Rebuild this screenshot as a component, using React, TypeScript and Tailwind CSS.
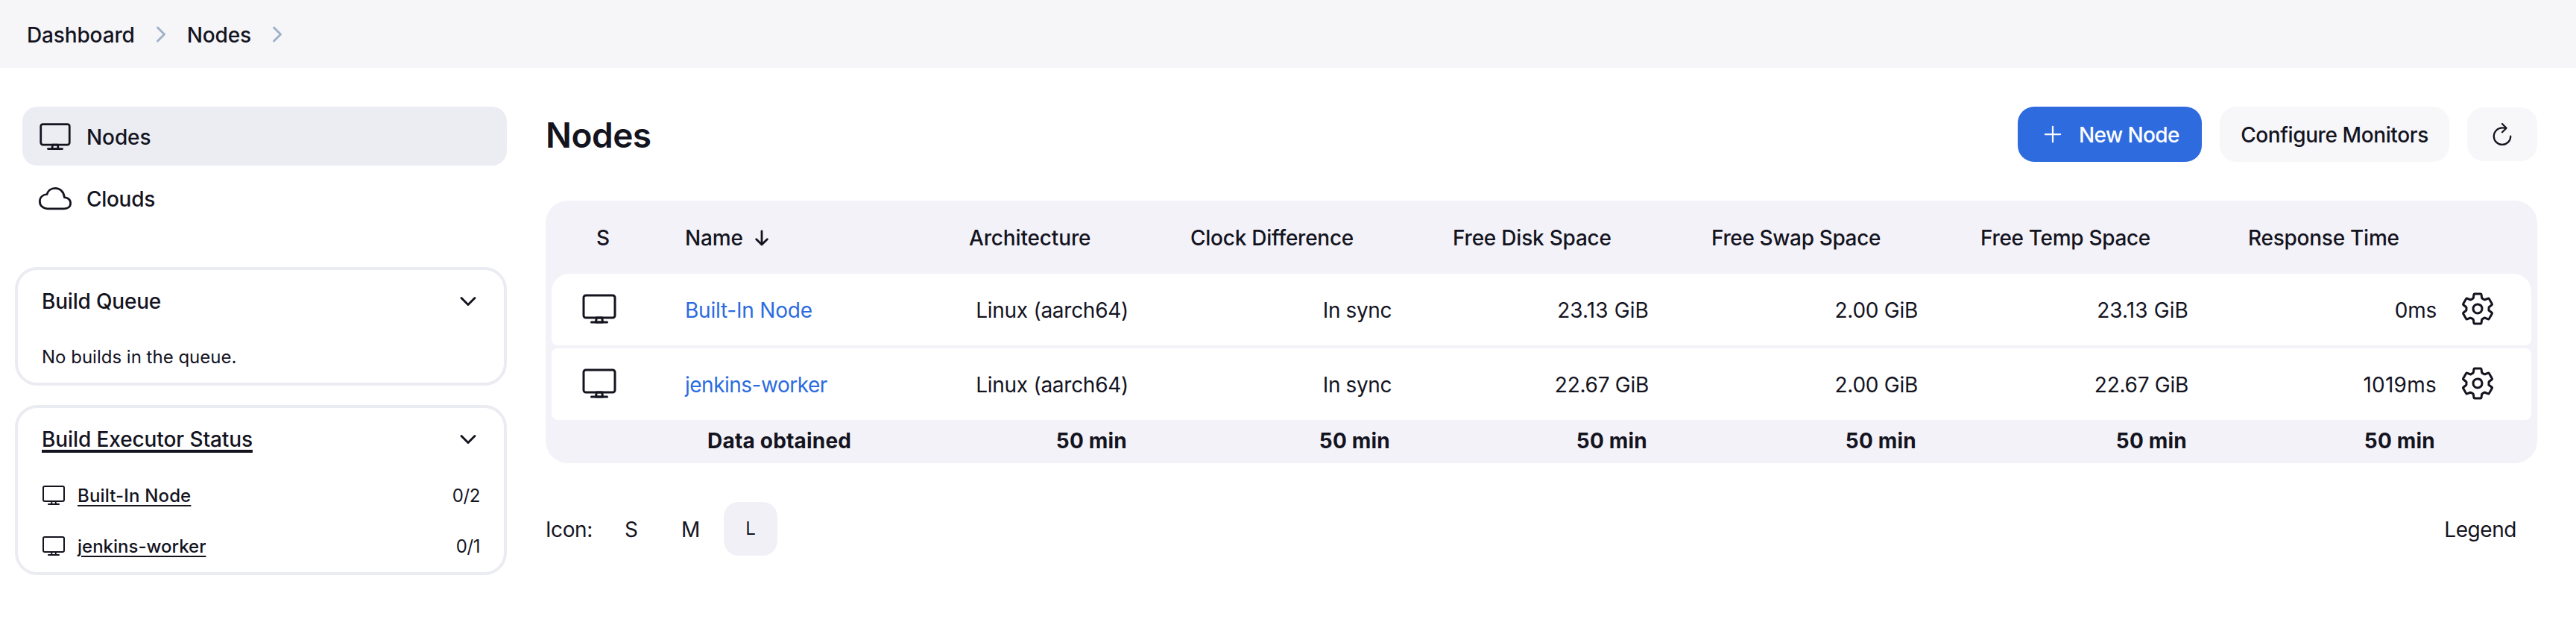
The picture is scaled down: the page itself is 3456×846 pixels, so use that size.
import type { ReactNode } from "react";
import {
  IoAddOutline,
  IoChevronDownOutline,
  IoChevronForwardOutline,
  IoCloudOutline,
  IoRefreshOutline,
  IoSettingsOutline,
} from "react-icons/io5";

const GRID =
  "grid grid-cols-[158px_382px_296px_352px_347px_361px_359px_293px_108px]";

const columns = [
  { label: "Architecture", head: "pl-[20px] tracking-[-0.15px]", pad: "pr-[62px]", footPad: "pr-[64px]" },
  { label: "Clock Difference", head: "pl-[21px] tracking-[-0.25px]", pad: "pr-[61px]", footPad: "pr-[63px]" },
  { label: "Free Disk Space", head: "pl-[21px] tracking-[-0.22px]", pad: "pr-[63px]", footPad: "pr-[65px]" },
  { label: "Free Swap Space", head: "pl-[21px] tracking-[-0.37px]", pad: "pr-[63px]", footPad: "pr-[65px]" },
  { label: "Free Temp Space", head: "pl-[21px] tracking-[-0.32px]", pad: "pr-[59px]", footPad: "pr-[61px]" },
  { label: "Response Time", head: "pl-[21px] tracking-[-0.25px]", pad: "pr-[19px]", footPad: "pr-[21px]" },
];

const tight = "tracking-[-0.27px]";
const loose = "tracking-[0.1px]";

const nodes = [
  {
    name: "Built-In Node",
    nameTracking: "tracking-[-0.22px]",
    cells: [
      ["Linux (aarch64)", tight],
      ["In sync", "tracking-[-0.4px]"],
      ["23.13 GiB", loose],
      ["2.00 GiB", tight],
      ["23.13 GiB", loose],
      ["0ms", tight],
    ],
    radius: "rounded-t-[24px] rounded-b-[8px]",
  },
  {
    name: "jenkins-worker",
    nameTracking: "tracking-[-0.5px]",
    cells: [
      ["Linux (aarch64)", tight],
      ["In sync", "tracking-[-0.4px]"],
      ["22.67 GiB", tight],
      ["2.00 GiB", tight],
      ["22.67 GiB", tight],
      ["1019ms", "tracking-[0.25px]"],
    ],
    radius: "rounded-[8px]",
  },
];

const executors = [
  { name: "Built-In Node", usage: "0/2", tracking: "tracking-[0.15px]" },
  { name: "jenkins-worker", usage: "0/1", tracking: "tracking-[0px]" },
];

function Monitor({ className }: { className: string }) {
  return (
    <svg className={className} viewBox="0 0 512 512" fill="none" stroke="currentColor" strokeWidth="32" strokeLinecap="round" strokeLinejoin="round">
      <rect x="32" y="64" width="448" height="320" rx="32" />
      <path d="M304 448l-8-64h-80l-8 64z" />
      <path d="M368 448H144" />
    </svg>
  );
}

function Breadcrumb({ children }: { children: ReactNode }) {
  return (
    <li className="flex items-center">
      <a className="pt-[3px] font-medium tracking-[-0.15px]">{children}</a>
      <IoChevronForwardOutline className="mr-[19px] ml-[19px] size-8 text-[#9fb0c8]" />
    </li>
  );
}

function Card({ title, className, children }: { title: ReactNode; className: string; children: ReactNode }) {
  return (
    <section className={`rounded-[30px] border-4 border-[#ebecf2] px-[32px] ${className}`}>
      <div className="flex h-[84px] items-center justify-between">
        <h2 className="font-medium">{title}</h2>
        <IoChevronDownOutline className="size-8" />
      </div>
      {children}
    </section>
  );
}

function Sidebar() {
  return (
    <aside className="w-[680px] shrink-0 pt-[52px] pl-[20px]">
      <nav className="flex flex-col gap-1 pl-[10px] font-medium">
        <a className="flex h-[79px] items-center gap-[20px] rounded-[20px] bg-[#ecedf3] pl-[22px]">
          <Monitor className="size-11" />
          <span className="pt-[2px] tracking-[-0.1px]">Nodes</span>
        </a>
        <a className="flex h-[79px] items-center gap-[20px] rounded-[20px] pl-[22px]">
          <IoCloudOutline className="size-11" />
          <span className="pt-[3px] tracking-[-0.3px]">Clouds</span>
        </a>
      </nav>
      <Card title={<span className="tracking-[-0.2px]">Build Queue</span>} className="mt-[53px] h-[159px]">
        <p className="mt-[14px] text-[24px] leading-[37px]">No builds in the queue.</p>
      </Card>
      <Card
        title={
          <a className="tracking-[-0.1px] underline decoration-[4px] underline-offset-[4px]">
            Build Executor Status
          </a>
        }
        className="mt-[26px] h-[228px]"
      >
        <ul className="-mt-px text-[24px]">
          {executors.map((e) => (
            <li key={e.name} className="flex h-[68px] items-center">
              <Monitor className="size-8" />
              <a className={`ml-[16px] pt-[1px] font-medium underline decoration-[2px] underline-offset-[4px] ${e.tracking}`}>
                {e.name}
              </a>
              <span className="ml-auto pt-[1px] tracking-[-0.4px]">{e.usage}</span>
            </li>
          ))}
        </ul>
      </Card>
    </aside>
  );
}

function NodesTable() {
  return (
    <div className="mt-[52px] rounded-[30px] bg-[#f3f2f8] px-[8px]">
      <div className={`${GRID} h-[98px] items-center pt-[1px] font-medium`}>
        <div className="pl-[60px]">S</div>
        <div className="flex items-center pl-[21px]">
          <span className="tracking-[-0.15px]">Name</span>
          <svg
            className="mt-[1px] ml-[15px] h-[22px] w-[20px]"
            viewBox="0 0 20 22"
            fill="none"
            stroke="currentColor"
            strokeWidth="2.8"
            strokeLinecap="round"
            strokeLinejoin="round"
          >
            <path d="M10 2v18M2.7 12.7 10 20l7.3-7.3" />
          </svg>
        </div>
        {columns.map((c) => (
          <div key={c.label} className={`whitespace-nowrap ${c.head}`}>
            {c.label}
          </div>
        ))}
      </div>
      <div className="flex flex-col gap-1">
        {nodes.map((n) => (
          <div key={n.name} className={`${GRID} h-[96px] items-center bg-white ${n.radius}`}>
            <Monitor className="mb-[2px] ml-[40px] size-12" />
            <a className={`pt-[2px] pl-[21px] text-[#2b6be0] ${n.nameTracking}`}>{n.name}</a>
            {n.cells.map(([value, tracking], i) => (
              <div key={i} className={`pt-[2px] text-right ${tracking} ${columns[i].pad}`}>
                {value}
              </div>
            ))}
            <IoSettingsOutline className="mb-[2px] ml-[12px] size-12" />
          </div>
        ))}
      </div>
      <div className={`${GRID} h-[58px] items-center pb-[2px] font-bold`}>
        <div />
        <div className="pl-[51px] tracking-[0.2px]">Data obtained</div>
        {columns.map((c) => (
          <div key={c.label} className={`text-right tracking-[0.2px] ${c.footPad}`}>
            50 min
          </div>
        ))}
      </div>
    </div>
  );
}

export default function App() {
  return (
    <div className="h-[846px] w-[3456px] overflow-hidden bg-white font-['Inter',sans-serif] text-[28px] leading-[34px] text-[#14141f]">
      <header className="h-[91px] bg-[#f6f6f9] pl-[36px]">
        <ol className="flex h-full items-center">
          <Breadcrumb>Dashboard</Breadcrumb>
          <Breadcrumb>Nodes</Breadcrumb>
        </ol>
      </header>
      <div className="flex">
        <Sidebar />
        <main className="ml-[52px] w-[2672px] pt-[52px]">
          <div className="flex h-[74px] items-center">
            <h1 className="pt-[1px] text-[46px] leading-[56px] font-semibold tracking-[-0.5px]">Nodes</h1>
            <div className="ml-auto flex items-center gap-[24px] font-medium">
              <button className="flex h-[74px] w-[247px] items-center rounded-[22px] bg-[#2e6bdf] pl-[29px] text-white">
                <IoAddOutline className="size-9" />
                <span className="ml-[17px] pt-[1px] tracking-[-0.6px]">New Node</span>
              </button>
              <button className="h-[74px] w-[308px] rounded-[22px] bg-[#f7f7fa] pt-[1px] tracking-[-0.4px]">
                Configure Monitors
              </button>
              <button className="flex h-[72px] w-[94px] items-center justify-center rounded-[22px] bg-[#f7f7fa]">
                <IoRefreshOutline className="size-9" />
              </button>
            </div>
          </div>
          <NodesTable />
          <div className="mt-[52px] flex h-[72px] items-center">
            <span className="w-[106px] pt-[2px] tracking-[-0.4px]">Icon:</span>
            <span className="w-[76px] pt-[2px]">S</span>
            <span className="w-[57px] pt-[2px]">M</span>
            <span className="flex size-[72px] items-center justify-center rounded-[20px] bg-[#f1f0f6] text-[24px]">
              L
            </span>
            <a className="mr-[28px] ml-auto pt-[2px] tracking-[-0.45px]">Legend</a>
          </div>
        </main>
      </div>
    </div>
  );
}
